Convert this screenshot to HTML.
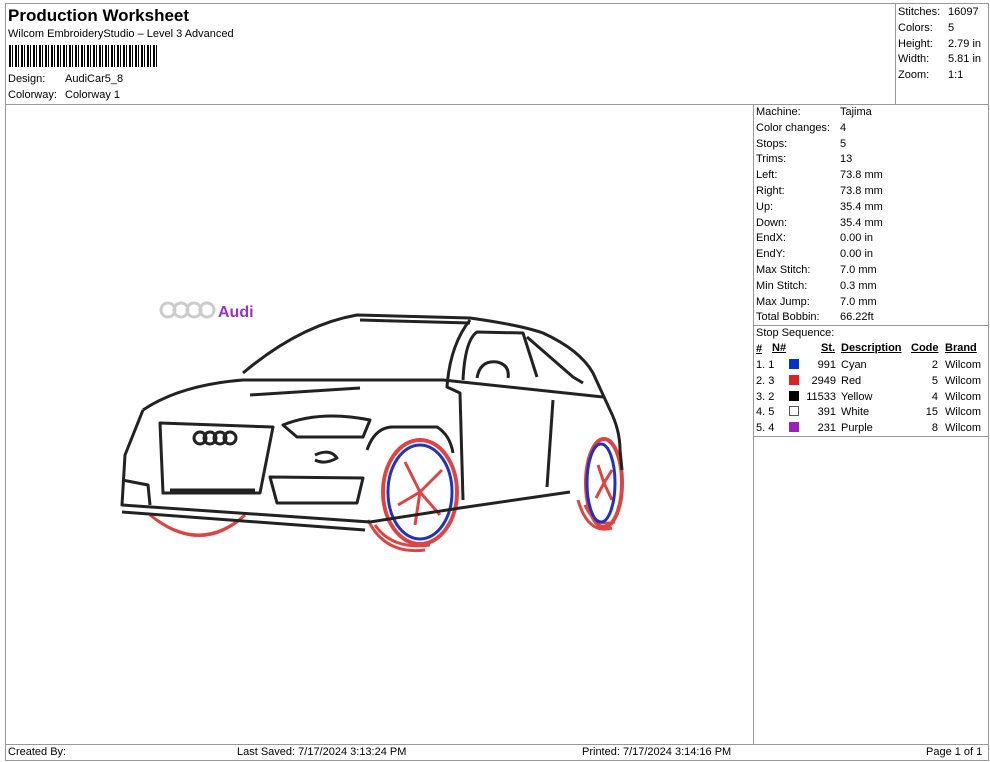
<!DOCTYPE html>
<html><head><style>
body{margin:0;width:990px;height:762px;background:#fff;font-family:"Liberation Sans",sans-serif;font-size:11px;color:#000;position:relative;overflow:hidden}
.a{position:absolute}
.t{position:absolute;white-space:nowrap}
.b{position:absolute;border:1px solid #999;box-sizing:border-box}
</style></head><body>
<div class="b" style="left:5px;top:3px;width:984px;height:758px"></div>
<div class="a" style="left:5px;top:104px;width:984px;height:1px;background:#999"></div>
<div class="a" style="left:895px;top:3px;width:1px;height:101px;background:#999"></div>
<div class="a" style="left:753px;top:104px;width:1px;height:640px;background:#999"></div>
<div class="a" style="left:5px;top:744px;width:984px;height:1px;background:#999"></div>
<div class="a" style="left:753px;top:325px;width:236px;height:1px;background:#999"></div>
<div class="a" style="left:753px;top:436px;width:236px;height:1px;background:#999"></div>
<div class="t" style="left:8px;top:6px;font-size:17px;font-weight:bold">Production Worksheet</div>
<div class="t" style="left:8px;top:28px">Wilcom EmbroideryStudio – Level 3 Advanced</div>
<div class="a" style="left:9px;top:45px;width:148px;height:22px;background:repeating-linear-gradient(90deg,#000 0 2px,#fff 2px 3px,#000 3px 4px,#fff 4px 6px)"></div>
<div class="t" style="left:8px;top:73px">Design:</div><div class="t" style="left:65px;top:73px">AudiCar5_8</div>
<div class="t" style="left:8px;top:89px">Colorway:</div><div class="t" style="left:65px;top:89px">Colorway 1</div>
<div class="t" style="left:898px;top:5px;line-height:15.8px">Stitches:<br>Colors:<br>Height:<br>Width:<br>Zoom:</div>
<div class="t" style="left:948px;top:5px;line-height:15.8px">16097<br>5<br>2.79 in<br>5.81 in<br>1:1</div>
<div class="t" style="left:756px;top:105px;line-height:15.8px">Machine:<br>Color changes:<br>Stops:<br>Trims:<br>Left:<br>Right:<br>Up:<br>Down:<br>EndX:<br>EndY:<br>Max Stitch:<br>Min Stitch:<br>Max Jump:<br>Total Bobbin:<br>Stop Sequence:</div>
<div class="t" style="left:840px;top:105px;line-height:15.8px">Tajima<br>4<br>5<br>13<br>73.8 mm<br>73.8 mm<br>35.4 mm<br>35.4 mm<br>0.00 in<br>0.00 in<br>7.0 mm<br>0.3 mm<br>7.0 mm<br>66.22ft</div>
<div class="t" style="left:756px;top:342px;line-height:15.8px;font-weight:bold;text-decoration:underline">#</div>
<div class="t" style="left:772px;top:342px;font-weight:bold;text-decoration:underline">N#</div>
<div class="t" style="left:821px;top:342px;font-weight:bold;text-decoration:underline">St.</div>
<div class="t" style="left:841px;top:342px;font-weight:bold;text-decoration:underline">Description</div>
<div class="t" style="left:911px;top:342px;font-weight:bold;text-decoration:underline">Code</div>
<div class="t" style="left:945px;top:342px;font-weight:bold;text-decoration:underline">Brand</div>
<div class="t" style="left:756px;top:358px;line-height:15.8px">1. 1<br>2. 3<br>3. 2<br>4. 5<br>5. 4</div>
<div class="a" style="left:789px;top:359px;width:10px;height:10px;background:#0033cc"></div>
<div class="a" style="left:789px;top:375px;width:10px;height:10px;background:#dd2222"></div>
<div class="a" style="left:789px;top:391px;width:10px;height:10px;background:#000"></div>
<div class="a" style="left:789px;top:406px;width:8px;height:8px;border:1px solid #555"></div>
<div class="a" style="left:789px;top:422px;width:10px;height:10px;background:#9922bb"></div>
<div class="t" style="left:800px;top:358px;width:36px;text-align:right;line-height:15.8px">991<br>2949<br>11533<br>391<br>231</div>
<div class="t" style="left:841px;top:358px;line-height:15.8px">Cyan<br>Red<br>Yellow<br>White<br>Purple</div>
<div class="t" style="left:900px;top:358px;width:38px;text-align:right;line-height:15.8px">2<br>5<br>4<br>15<br>8</div>
<div class="t" style="left:945px;top:358px;line-height:15.8px">Wilcom<br>Wilcom<br>Wilcom<br>Wilcom<br>Wilcom</div>
<div class="t" style="left:8px;top:746px">Created By:</div>
<div class="t" style="left:237px;top:746px">Last Saved: 7/17/2024 3:13:24 PM</div>
<div class="t" style="left:582px;top:746px">Printed: 7/17/2024 3:14:16 PM</div>
<div class="t" style="left:926px;top:746px">Page 1 of 1</div>
<svg class="a" style="left:0;top:0" width="753" height="744">
<g fill="none" stroke="#d44" stroke-width="3">
<path d="M150 515 Q200 555 245 515"/><path d="M158 521 Q200 550 238 521"/>
<path d="M368 520 Q385 555 425 550"/><path d="M375 525 Q392 550 430 545"/>
<path d="M578 500 Q588 535 612 528"/><path d="M585 505 Q595 528 615 522"/>
<ellipse cx="420" cy="492" rx="37" ry="52" stroke-width="4"/>
<ellipse cx="604" cy="483" rx="18" ry="44" stroke-width="4"/>
<path d="M420 492 L405 462 M420 492 L442 470 M420 492 L440 515 M420 492 L415 525 M420 492 L398 505"/>
<path d="M604 483 L598 465 M604 483 L612 470 M604 483 L612 500 M604 483 L596 498"/>
</g>
<g fill="none" stroke="#23b" stroke-width="3">
<ellipse cx="420" cy="492" rx="32" ry="47"/>
<ellipse cx="601" cy="483" rx="14" ry="39"/>
</g>
<g fill="none" stroke="#222" stroke-width="3" stroke-linejoin="round">
<path d="M243 373 Q300 325 357 315 L470 318 Q520 325 543 333 Q580 350 593 373 L610 410 Q620 430 620 450 L622 470"/>
<path d="M360 320 L470 323"/>
<path d="M143 410 Q180 385 243 380 L443 380 L603 397"/>
<path d="M143 410 L125 455 L122 505 L370 522 M122 512 L365 530"/>
<path d="M370 522 L460 508 L570 492"/>
<path d="M470 320 Q450 345 447 387 L460 393 L463 500"/>
<path d="M553 400 L547 487"/>
<path d="M463 380 Q465 340 477 332 L523 333 L537 377"/>
<path d="M527 337 L573 377 L583 383"/>
<path d="M477 378 Q480 360 497 362 Q510 365 508 378"/>
<path d="M160 423 L273 427 L260 493 L163 493 Z"/>
<path d="M170 490 L255 490"/>
<path d="M283 425 Q320 410 370 420 L363 437 L297 437 Z"/>
<path d="M250 395 L360 388"/>
<path d="M270 477 L363 478 L357 503 L277 503 Z"/>
<path d="M367 450 Q375 427 393 427 L437 427 Q450 435 453 453"/>
<path d="M122 480 L148 485 L150 505"/>
<path d="M315 455 Q330 448 337 458 Q325 465 315 460"/>
<ellipse cx="200" cy="438" rx="6" ry="6"/><ellipse cx="210" cy="438" rx="6" ry="6"/><ellipse cx="220" cy="438" rx="6" ry="6"/><ellipse cx="230" cy="438" rx="6" ry="6"/>
</g>
<g fill="none" stroke="#ccc" stroke-width="3"><circle cx="168" cy="310" r="7"/><circle cx="181" cy="310" r="7"/><circle cx="194" cy="310" r="7"/><circle cx="207" cy="310" r="7"/></g>
<text x="218" y="317" font-family="Liberation Sans" font-size="16" font-weight="bold" fill="#9933bb">Audi</text>
</svg>
</body></html>
